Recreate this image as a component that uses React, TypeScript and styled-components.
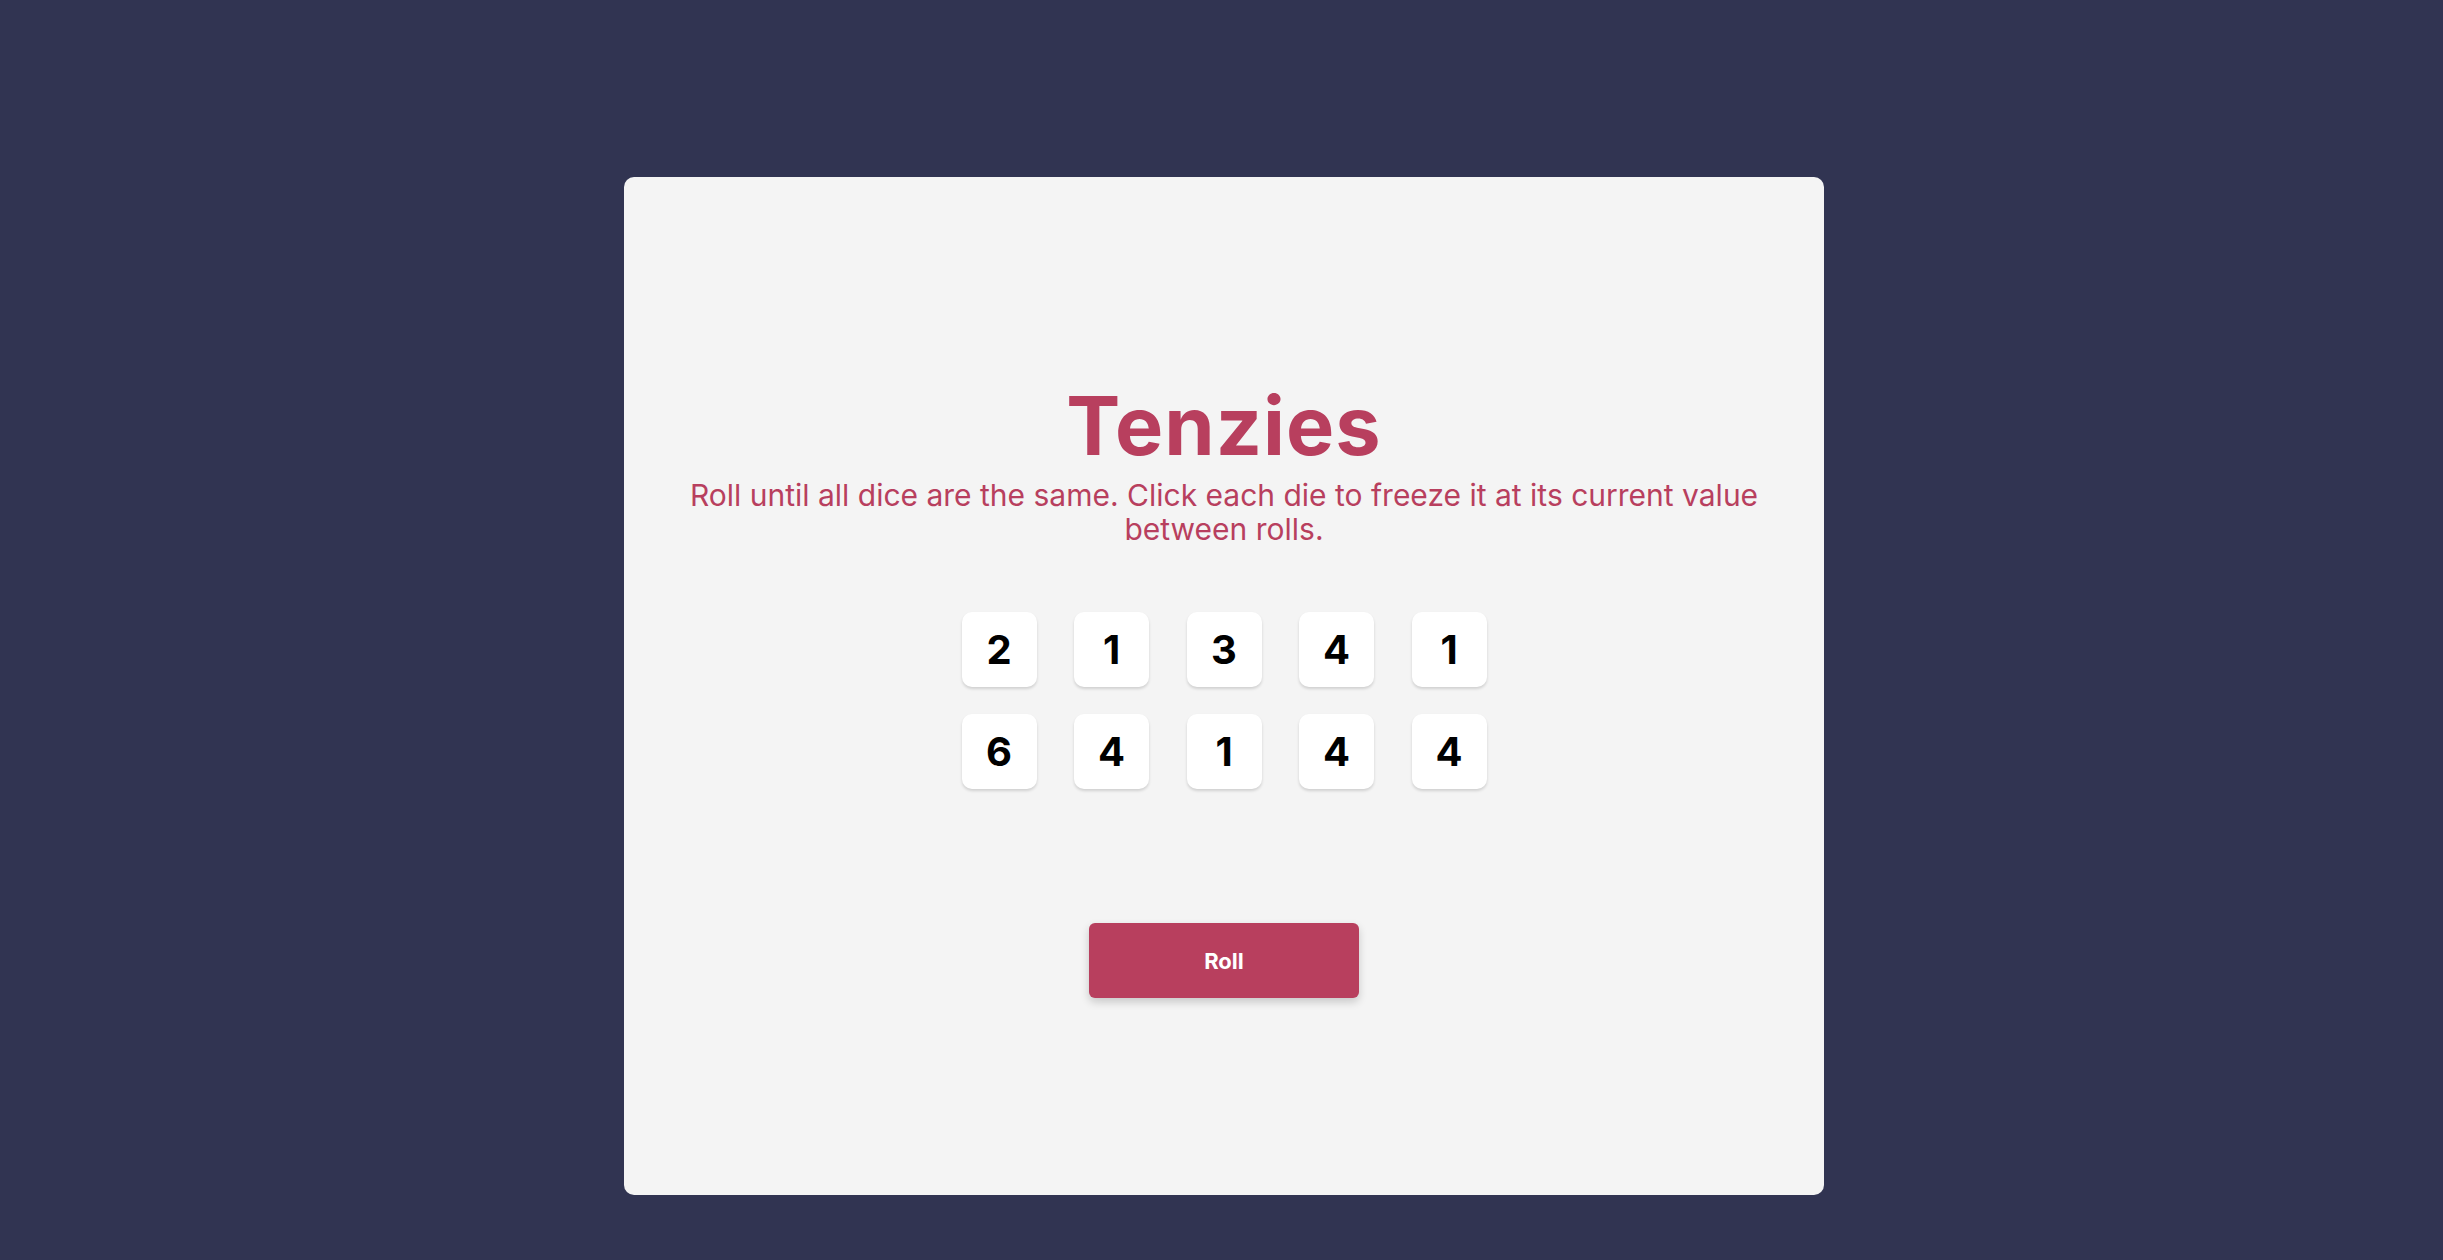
import React from 'react';
import styled, { createGlobalStyle } from 'styled-components';

const GlobalStyle = createGlobalStyle`
    html, body {
        margin: 0;
        padding: 0;
        background: #313452;
        font-family: Inter, "Noto Sans", sans-serif;
    }
`;

const Page = styled.div`
    display: flex;
    justify-content: center;
    padding: 177px 0 0 5px;
    min-height: 1260px;
    box-sizing: border-box;
`;

const Board = styled.main`
    width: 1200px;
    height: 1018px;
    box-sizing: border-box;
    background: #f4f4f4;
    border-radius: 10px;
    padding: 209px 50px 0;
    display: flex;
    flex-direction: column;
    align-items: center;
`;

const Title = styled.h1`
    margin: 0;
    font-size: 81px;
    line-height: 1;
    font-weight: 700;
    color: #b83f5e;
    letter-spacing: 1px;
`;

const Instructions = styled.p`
    margin: 11px 0 0;
    font-size: 30px;
    line-height: 34px;
    font-weight: 400;
    color: #b83f5e;
    text-align: center;
`;

const DiceGrid = styled.div`
    margin-top: 66px;
    display: grid;
    grid-template-columns: repeat(5, 75px);
    column-gap: 37.5px;
    row-gap: 27px;
`;

const Die = styled.button<{ $held?: boolean }>`
    width: 75px;
    height: 75px;
    border: none;
    border-radius: 10px;
    background: ${(p) => (p.$held ? '#59e391' : '#ffffff')};
    box-shadow: 0 2px 3px rgba(0, 0, 0, 0.15);
    font-family: Inter, "Noto Sans", sans-serif;
    font-size: 40px;
    font-weight: 700;
    color: #000;
    display: flex;
    align-items: center;
    justify-content: center;
    padding: 0;
    cursor: pointer;
`;

const RollButton = styled.button`
    margin-top: 134px;
    width: 270px;
    height: 75px;
    border: none;
    border-radius: 6px;
    background: #b83f5e;
    color: #fff;
    font-family: Inter, "Noto Sans", sans-serif;
    font-size: 22px;
    font-weight: 700;
    box-shadow: 0 4px 8px rgba(0, 0, 0, 0.18);
    cursor: pointer;
`;

const dice = [2, 1, 3, 4, 1, 6, 4, 1, 4, 4];

const App = () => {
    return (
        <>
            <GlobalStyle />
            <Page>
                <Board>
                    <Title>Tenzies</Title>
                    <Instructions>
                        Roll until all dice are the same. Click each die to freeze it at its current value
                        between rolls.
                    </Instructions>
                    <DiceGrid>
                        {dice.map((value, i) => (
                            <Die key={i}>{value}</Die>
                        ))}
                    </DiceGrid>
                    <RollButton>Roll</RollButton>
                </Board>
            </Page>
        </>
    );
};

export default App;
